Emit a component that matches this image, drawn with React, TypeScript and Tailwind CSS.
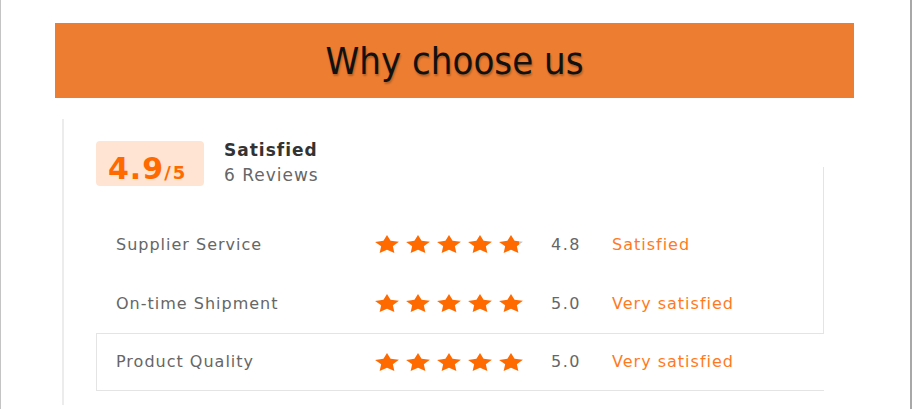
import { FC } from 'react';

type Row = {
   label: string;
   score: number;
   verdict: string;
};

const rows: Row[] = [
   { label: 'Supplier Service', score: 4.8, verdict: 'Satisfied' },
   { label: 'On-time Shipment', score: 5.0, verdict: 'Very satisfied' },
   { label: 'Product Quality', score: 5.0, verdict: 'Very satisfied' },
];

const STAR = 'M12 1l3.3 6.8 7.7 1-5.6 5.3 1.4 7.6L12 18.1l-6.8 3.6 1.4-7.6L1 9l7.7-1.2z';

const Star: FC<{ fill: number; id: string }> = ({ fill, id }) => {
   return (
      <svg width="26" height="21" viewBox="0 0 24 24" preserveAspectRatio="none">
         <defs>
            <linearGradient id={id} x1="0" x2="1" y1="0" y2="0">
               <stop offset={fill} stopColor="#ff6a00" />
               <stop offset={fill} stopColor="#c4c4c4" />
            </linearGradient>
         </defs>
         <path d={STAR} fill={`url(#${id})`} />
      </svg>
   );
};

const Stars: FC<{ score: number; name: string }> = ({ score, name }) => {
   return (
      <div className="flex gap-[5px] w-[177px]">
         {[0, 1, 2, 3, 4].map((i) => {
            // last star of 4.8 is not quite full
            const f = Math.max(0, Math.min(1, score - i));
            return <Star key={i} id={`${name}-${i}`} fill={f === 1 ? 1 : 0.82} />;
         })}
      </div>
   );
};

const RatingRow: FC<{ row: Row; name: string; h: string }> = ({ row, name, h }) => {
   return (
      <div className={`flex items-center ${h} pl-5 text-[16px] tracking-[1px]`}>
         <div className="w-[258px] text-[#666]">{row.label}</div>
         <Stars score={row.score} name={name} />
         <div className="w-[61px] text-[#666] tracking-[1.5px]">{row.score.toFixed(1)}</div>
         <div className="text-[#ff7a1f]">{row.verdict}</div>
      </div>
   );
};

export default function App() {
   return (
      <div
         className="w-[912px] h-[409px] bg-white border-l border-r-2 border-l-[#c4c4c4] border-r-[#a8a8a8] overflow-hidden flex flex-col"
         style={{ fontFamily: '"DejaVu Sans", "Liberation Sans", sans-serif' }}
      >
         {/* banner */}
         <div className="mt-[23px] ml-[54px] w-[799px] h-[75px] bg-[#ed7d31] flex items-center justify-center pt-[2px]">
            <span
               className="text-[38px] text-[#111] [text-shadow:1px_2px_2px_rgba(0,0,0,0.25)]"
               style={{ fontFamily: '"DejaVu Sans Condensed", "Liberation Sans", sans-serif' }}
            >
               Why choose us
            </span>
         </div>

         {/* rating card */}
         <div className="mt-[21px] ml-[61px] w-[762px] h-[286px] border-l-2 border-[#ececec] flex flex-col">
            <div className="mt-[48px] ml-[32px] border-r border-b border-[#e4e4e4] flex flex-col">
               <div className="flex items-center gap-5 -mt-[29px]">
                  <div className="w-[108px] h-[45px] rounded bg-[#ffe4d3] flex items-baseline pl-[12px] pt-[5px] font-bold text-[#ff6a00]">
                     <span className="text-[30px] tracking-[1px]">4.9</span>
                     <span className="text-[18px] tracking-[2px]">/5</span>
                  </div>
                  <div className="flex flex-col tracking-[1px] leading-[25px]">
                     <span className="text-[17px] font-bold text-[#333]">Satisfied</span>
                     <span className="text-[17px] text-[#666]">6 Reviews</span>
                  </div>
               </div>
               <div className="mt-[27px]">
                  <RatingRow row={rows[0]} name="r0" h="h-[59px]" />
                  <RatingRow row={rows[1]} name="r1" h="h-[59px]" />
               </div>
            </div>
            <div className="ml-[32px] border-l border-b border-[#e4e4e4]">
               <div className="-ml-px">
                  <RatingRow row={rows[2]} name="r2" h="h-[56px]" />
               </div>
            </div>
         </div>
      </div>
   );
}
